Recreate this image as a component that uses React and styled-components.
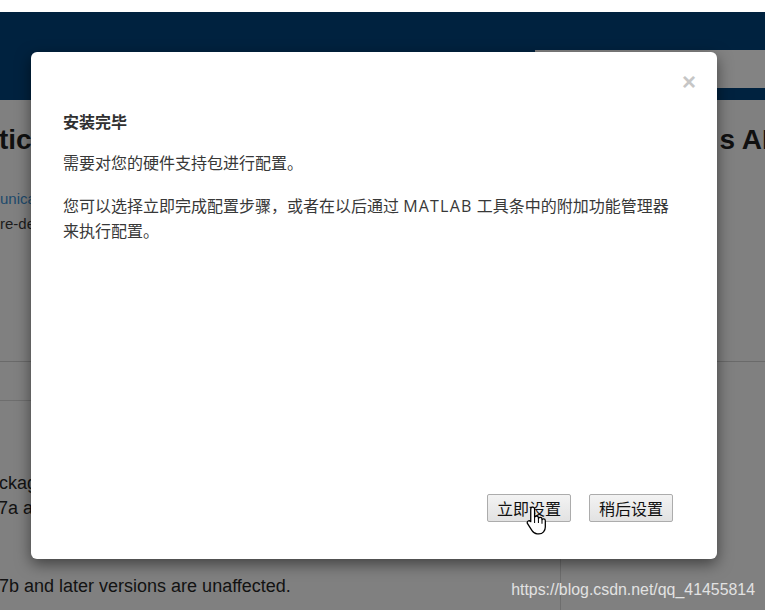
import React from 'react';
import styled, { createGlobalStyle } from 'styled-components';

const GlobalStyle = createGlobalStyle`
  html, body {
    margin: 0;
    padding: 0;
    background: #ffffff;
  }
  * {
    box-sizing: border-box;
  }
`;

const Page = styled.div`
  position: relative;
  width: 765px;
  height: 610px;
  overflow: hidden;
  display: flex;
  flex-direction: column;
  background: #808080;
  font-family: "Liberation Sans", Arial, sans-serif;
`;

const TopStrip = styled.div`
  height: 12px;
  background: #ffffff;
`;

const Header = styled.div`
  height: 88px;
  background: #00223f;
  display: flex;
  justify-content: flex-end;
  align-items: flex-end;
  padding-bottom: 12px;
`;

const SearchBox = styled.div`
  width: 230px;
  height: 38px;
  background: #838383;
`;

const Upper = styled.div`
  height: 261px;
  padding-top: 24px;
`;

const TitleRow = styled.div`
  display: flex;
  justify-content: space-between;
  white-space: nowrap;
  overflow: hidden;
  margin-bottom: 30px;
`;

const PageTitle = styled.h1`
  margin: 0;
  font-size: 28px;
  line-height: 32px;
  font-weight: 700;
  color: #101010;
  margin-left: ${p => (p.$right ? '0' : '-1px')};
  margin-right: ${p => (p.$right ? '-25px' : '0')};
`;

const MetaLine = styled.div`
  font-size: 15px;
  line-height: 25px;
  white-space: nowrap;
  color: ${p => (p.$link ? '#1d4a6c' : '#1c1c1c')};
`;

const Lower = styled.div`
  flex: 1;
  display: grid;
  grid-template-columns: 561px 1fr;
  border-top: 1px solid #6a6a6a;
`;

const MainColumn = styled.div`
  border-right: 1px solid #6e6e6e;
`;

const TabBar = styled.div`
  height: 39px;
  border-bottom: 1px solid #6e6e6e;
`;

const Article = styled.div`
  padding-top: 70px;
`;

const BodyText = styled.p`
  margin: 0;
  font-size: 18px;
  line-height: 25px;
  color: #121212;
  white-space: nowrap;
  margin-left: ${p => p.$shift || '0'};
`;

const Gap = styled.div`
  height: ${p => p.$h}px;
`;

const Watermark = styled.div`
  position: absolute;
  right: 10px;
  bottom: 10px;
  font-size: 15.9px;
  line-height: 20px;
  color: #e2e2e2;
`;

const Dialog = styled.div`
  position: absolute;
  left: 31px;
  top: 52px;
  width: 686px;
  height: 507px;
  background: #ffffff;
  border-radius: 6px;
  box-shadow: 0 5px 15px rgba(0, 0, 0, 0.5);
  display: flex;
  flex-direction: column;
  font-family: "Open Sans", "Noto Sans CJK SC", sans-serif;
`;

const CloseRow = styled.div`
  height: 46px;
  display: flex;
  justify-content: flex-end;
  padding: 18px 21px 0;
`;

const CloseButton = styled.button`
  border: none;
  background: none;
  padding: 0;
  font-family: "Liberation Sans", Arial, sans-serif;
  font-size: 24px;
  line-height: 24px;
  height: 24px;
  font-weight: 700;
  color: #c6c6c6;
  cursor: pointer;
`;

const DialogBody = styled.div`
  padding: 12px 20px 0 32px;
  color: #383838;
  font-size: 16px;
  line-height: 25px;
`;

const DialogTitle = styled.h4`
  margin: 0 0 16px;
  font-size: 16px;
  line-height: 25px;
  font-weight: 700;
  color: #303030;
`;

const Para = styled.p`
  margin: 0 0 18px;
`;

const Latin = styled.span`
  letter-spacing: 1.2px;
`;

const DialogFooter = styled.div`
  margin-top: auto;
  display: flex;
  justify-content: flex-end;
  gap: 18px;
  padding: 0 44px 37px;
`;

const Button = styled.button`
  width: 84px;
  height: 28px;
  padding: 0;
  border: 1px solid #acacac;
  border-radius: 2px;
  background: linear-gradient(#f3f3f3, #e2e2e2);
  font-family: "Noto Sans CJK SC", sans-serif;
  font-size: 16px;
  line-height: 26px;
  color: #111;
  cursor: pointer;
`;

const Cursor = styled.svg`
  position: absolute;
  left: 525px;
  top: 505px;
  width: 23px;
  height: 31px;
  pointer-events: none;
`;

const HandCursor = () => (
  <Cursor viewBox="0 0 18 24">
    <path
      d="M6 1.5C6.8 1.5 7.5 2.2 7.5 3V9.5C7.8 8.9 8.4 8.5 9.1 8.5C9.9 8.5 10.5 9.1 10.5 9.9V10.3C10.8 9.8 11.3 9.5 11.9 9.5C12.7 9.5 13.3 10.1 13.3 10.9V11.3C13.6 10.9 14 10.7 14.5 10.7C15.3 10.7 15.9 11.3 15.9 12.1V17C15.9 20 13.9 22.5 10.9 22.5H9.5C7.5 22.5 6.5 21.5 5.5 20L2 14.5C1.5 13.7 1.8 12.8 2.5 12.4C3.2 12 4 12.3 4.5 12.9V3C4.5 2.2 5.2 1.5 6 1.5Z"
      fill="#ffffff"
      stroke="#000000"
      strokeWidth="1"
      strokeLinejoin="round"
    />
    <path d="M10.5 10.3V14M13.3 11.3V14.5M7.5 9.5V14" stroke="#000000" strokeWidth="0.8" fill="none" />
  </Cursor>
);

const App = () => {
  return (
    <>
      <GlobalStyle />
      <Page>
        <TopStrip />
        <Header>
          <SearchBox />
        </Header>
        <Upper>
          <TitleRow>
            <PageTitle>tic</PageTitle>
            <PageTitle $right>s ADI</PageTitle>
          </TitleRow>
          <MetaLine $link>unication</MetaLine>
          <MetaLine>re-deployment</MetaLine>
        </Upper>
        <Lower>
          <MainColumn>
            <TabBar />
            <Article>
              <BodyText $shift="-1px">ckages are affected</BodyText>
              <BodyText $shift="-2px">7a and earlier</BodyText>
              <Gap $h={53} />
              <BodyText $shift="-1px">7b and later versions are unaffected.</BodyText>
            </Article>
          </MainColumn>
          <div />
        </Lower>
        <Watermark>https://blog.csdn.net/qq_41455814</Watermark>

        <Dialog>
          <CloseRow>
            <CloseButton>×</CloseButton>
          </CloseRow>
          <DialogBody>
            <DialogTitle>安装完毕</DialogTitle>
            <Para>需要对您的硬件支持包进行配置。</Para>
            <Para>
              您可以选择立即完成配置步骤，或者在以后通过 <Latin>MATLAB</Latin> 工具条中的附加功能管理器
              <br />
              来执行配置。
            </Para>
          </DialogBody>
          <DialogFooter>
            <Button>立即设置</Button>
            <Button>稍后设置</Button>
          </DialogFooter>
        </Dialog>
        <HandCursor />
      </Page>
    </>
  );
};

export default App;
